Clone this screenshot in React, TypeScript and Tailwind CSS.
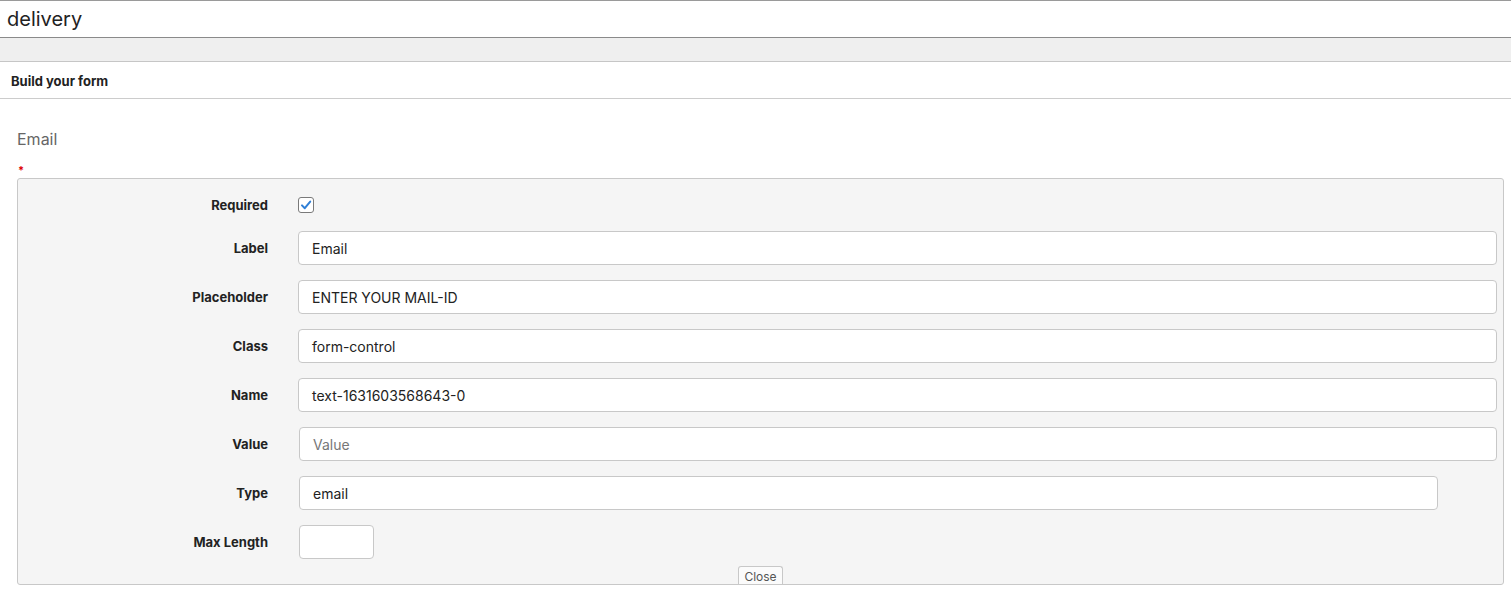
import React from "react";

const font = { fontFamily: 'Inter, "Liberation Sans", Arial, sans-serif' };

function Row({ label, children }: { label: string; children: React.ReactNode }) {
  return (
    <div className="flex items-center h-[34px]">
      <div className="w-[250px] shrink-0 text-right text-[13px] font-bold text-[#222] pt-px">{label}</div>
      <div className="flex-1 flex pl-[30px]">{children}</div>
    </div>
  );
}

function TextBox({ value, placeholder, className = "" }: { value?: string; placeholder?: string; className?: string }) {
  return (
    <div
      className={`h-[34px] bg-white border border-[#c8c8c8] rounded-[4px] flex items-center px-[13px] text-[14px] ${
        value ? "text-[#222]" : "text-[#777]"
      } ${className}`}
    >
      {value || placeholder}
    </div>
  );
}

export default function App() {
  return (
    <div className="w-[1511px] h-[594px] bg-white overflow-hidden" style={font}>
      <div className="border-t border-[#9a9a9a] border-b border-b-[#8a8a8a] h-[38px] flex items-center px-[7px]">
        <span className="text-[20px] text-[#222] leading-none">delivery</span>
      </div>
      <div className="h-[24px] bg-[#efefef] border-b border-[#c6c6c6]" />
      <div className="h-[37px] border-b border-[#cccccc] flex items-center px-[11px] pt-[3px]">
        <span className="text-[13px] font-bold text-[#222]">Build your form</span>
      </div>
      <div className="px-[17px] pt-[30px] text-[16px] text-[#666] leading-[20px]">Email</div>
      <div className="pl-[18px] h-[27px] flex items-end">
        <span className="text-[11px] text-[#d00] leading-none font-bold">*</span>
      </div>
      <div className="mt-[2px] ml-[17px] mr-[7px] h-[407px] border border-[#c8c8c8] rounded-[3px] bg-[#f5f5f5] pt-[15px] pr-[6px] flex flex-col">
        <div className="flex flex-col gap-[15px]">
          <div className="flex items-center h-[22px]">
            <div className="w-[250px] shrink-0 text-right text-[13px] font-bold text-[#222] pt-[2px]">Required</div>
            <div className="pl-[30px] flex">
              <span className="w-[16px] h-[16px] bg-white border border-[#7a7a7a] rounded-[3px] flex items-center justify-center">
                <svg width="12" height="12" viewBox="0 0 12 12">
                  <path d="M2 6.4 L4.8 9.2 L10.2 2.6" fill="none" stroke="#2f7fd6" strokeWidth="2" strokeLinecap="round" strokeLinejoin="round" />
                </svg>
              </span>
            </div>
          </div>
          <Row label="Label">
            <TextBox value="Email" className="flex-1" />
          </Row>
          <Row label="Placeholder">
            <TextBox value="ENTER YOUR MAIL-ID" className="flex-1" />
          </Row>
          <Row label="Class">
            <TextBox value="form-control" className="flex-1" />
          </Row>
          <Row label="Name">
            <TextBox value="text-1631603568643-0" className="flex-1" />
          </Row>
          <Row label="Value">
            <TextBox placeholder="Value" className="flex-1 ml-px" />
          </Row>
          <Row label="Type">
            <TextBox value="email" className="flex-1 ml-px mr-[59px]" />
          </Row>
          <Row label="Max Length">
            <TextBox className="w-[75px] ml-px" />
          </Row>
        </div>
        <div className="flex-1" />
        <div className="flex justify-center pl-[6px]">
          <div className="h-[18px] px-[5px] bg-[#fbfbfb] border border-b-0 border-[#c8c8c8] rounded-t-[3px] text-[12px] text-[#555] flex items-center pt-[2px]">
            Close
          </div>
        </div>
      </div>
    </div>
  );
}
